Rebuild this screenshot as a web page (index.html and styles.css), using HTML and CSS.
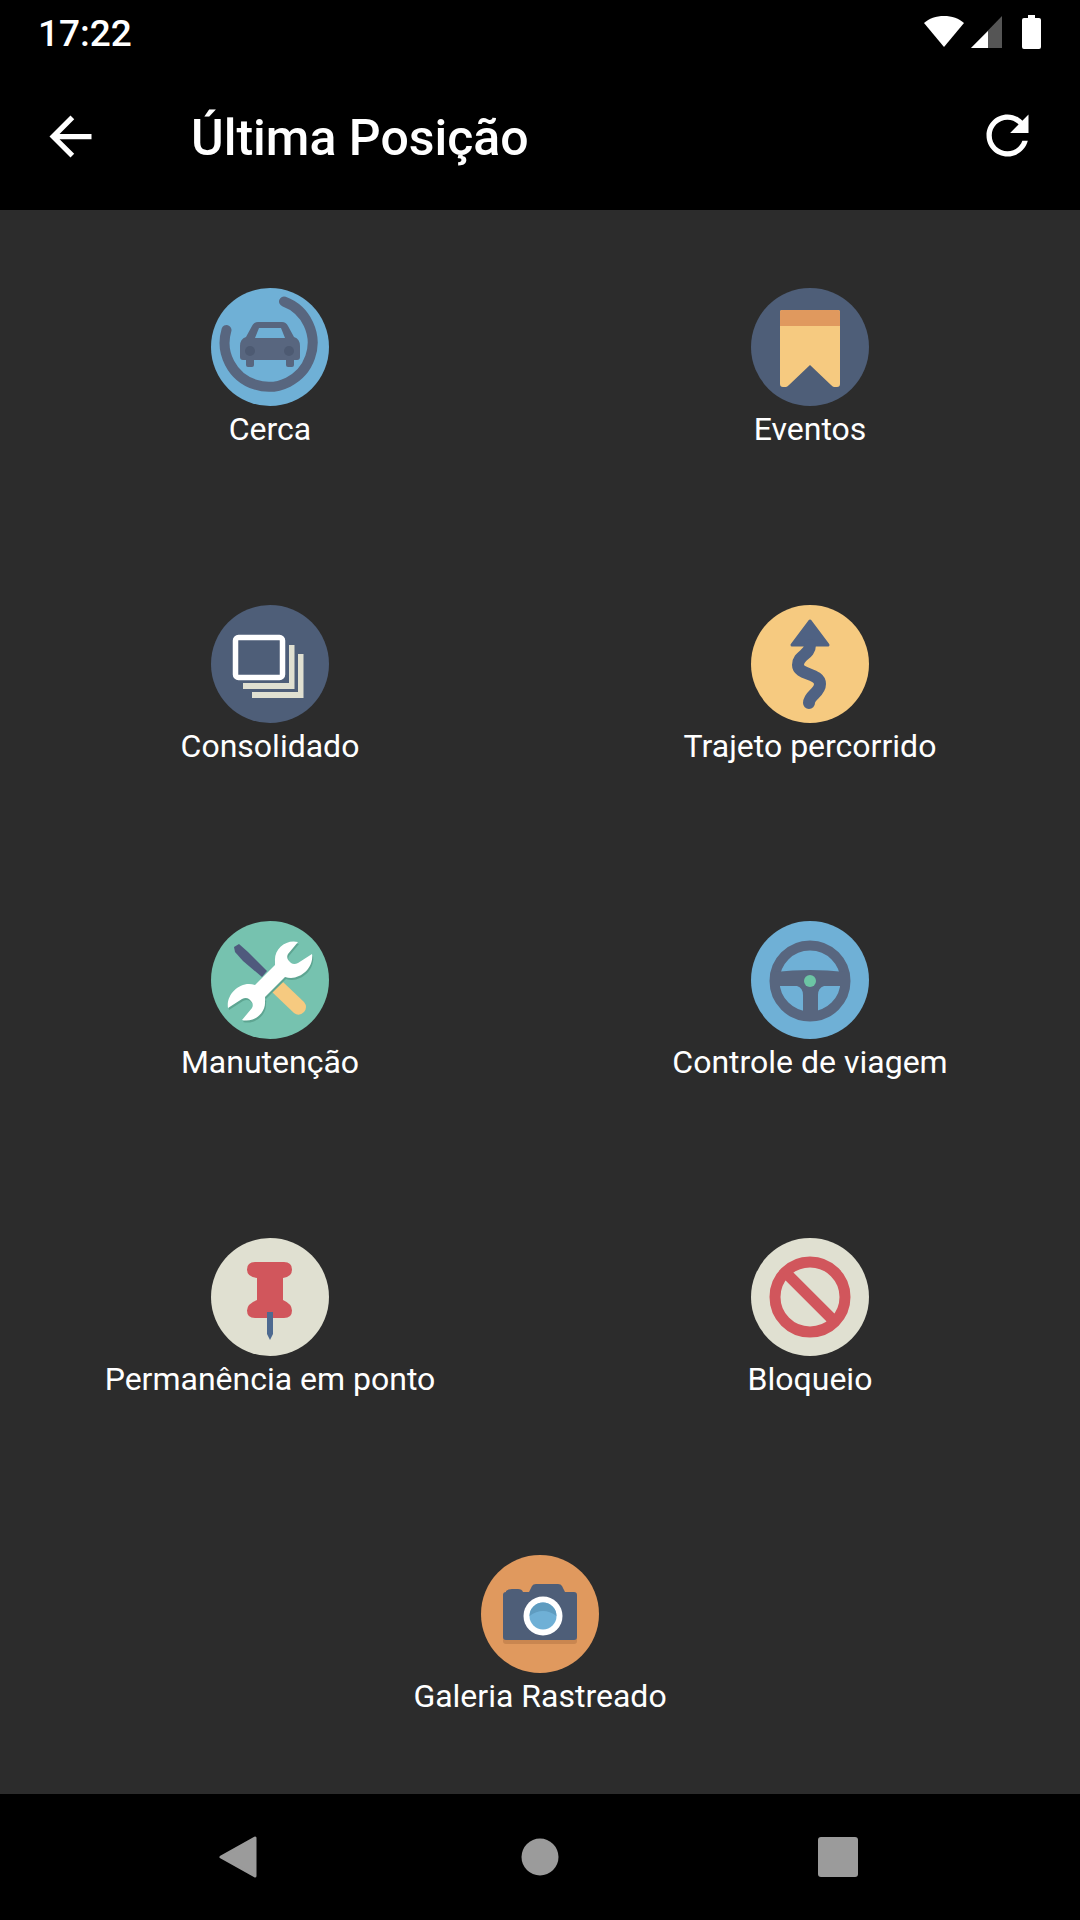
FILE: index.html
```html
<!DOCTYPE html>
<html lang="pt-BR">
<head>
  <meta charset="UTF-8">
  <meta name="viewport" content="width=device-width, initial-scale=1">
  <title>Última Posição</title>
  <link rel="stylesheet" href="styles.css">
</head>
<body>
  <div class="status-bar">
    <span class="time">17:22</span>
    <div class="status-icons">
      <svg class="wifi" width="40" height="31" viewBox="0 0 40 31"><path d="M20 31 0 7C5 2.500 12 0 20 0s15 2.500 20 7z" fill="#fff"/></svg>
      <svg class="signal" width="31" height="32" viewBox="0 0 31 32"><path d="M31 0v32H0z" fill="#555"/><path d="M17 15v17H0z" fill="#fff"/></svg>
      <svg class="battery" width="19" height="34" viewBox="0 0 19 34"><path d="M6 0h7v3h4q2 0 2 2v27q0 2-2 2H2q-2 0-2-2V5q0-2 2-2h4z" fill="#fff"/></svg>
    </div>
  </div>

  <header class="toolbar">
    <svg class="back" width="63" height="63" viewBox="0 0 24 24"><path d="M20 11H7.830l5.590-5.590L12 4l-8 8 8 8 1.410-1.410L7.830 13H20v-2z" fill="#fff"/></svg>
    <h1 class="title">Última Posição</h1>
    <svg class="refresh" width="63" height="63" viewBox="0 0 24 24"><path d="M17.650 6.350C16.200 4.900 14.210 4 12 4c-4.420 0-7.990 3.580-7.990 8s3.570 8 7.990 8c3.730 0 6.840-2.550 7.730-6h-2.080c-.82 2.330-3.040 4-5.650 4-3.310 0-6-2.690-6-6s2.690-6 6-6c1.660 0 3.140.69 4.220 1.780L13 11h7V4l-2.350 2.350z" fill="#fff"/></svg>
  </header>

  <main class="menu">
    <div class="item">
      <svg class="icon" viewBox="0 0 118 118">
        <circle cx="59" cy="59" r="59" fill="#6fb0d6"/>
        <path d="M73 13.500A44 44 0 1 1 15.500 42" fill="none" stroke="#58667f" stroke-width="10" stroke-linecap="round"/>
        <path d="M29 58q0-7 6-9l6-11q2-4 6-4h24q4 0 6 4l6 11q6 2 6 9v11q0 3-3 3h-3v5q0 2-2 2h-4q-2 0-2-2v-5H43v5q0 2-2 2h-4q-2 0-2-2v-5h-3q-3 0-3-3z" fill="#58667f"/>
        <path d="M48 40h22l4 10H44z" fill="#6fb0d6"/>
        <circle cx="39" cy="63" r="5" fill="#4d5a72"/>
        <circle cx="78" cy="63" r="5" fill="#4d5a72"/>
      </svg>
      <span class="label">Cerca</span>
    </div>

    <div class="item">
      <svg class="icon" viewBox="0 0 118 118">
        <circle cx="59" cy="59" r="59" fill="#4e5e78"/>
        <path d="M31 22h56q2 0 2 2v72q0 3-3 3h-3q-1 0-3-2L59 77 38 97q-2 2-3 2h-3q-3 0-3-3V24q0-2 2-2z" fill="#f6ca80"/>
        <path d="M31 22h56q2 0 2 2v14H29V24q0-2 2-2z" fill="#e0995e"/>
      </svg>
      <span class="label">Eventos</span>
    </div>

    <div class="item">
      <svg class="icon" viewBox="0 0 118 118">
        <circle cx="59" cy="59" r="59" fill="#4e5e78"/>
        <path d="M78 40h5.500v44H32v-6h46z" fill="#e0e0d1"/>
        <path d="M87 49h5.500v44H41v-6h46z" fill="#e0e0d1"/>
        <rect x="24.500" y="32.500" width="47" height="40" rx="3" fill="none" stroke="#fff" stroke-width="5.500"/>
      </svg>
      <span class="label">Consolidado</span>
    </div>

    <div class="item">
      <svg class="icon" viewBox="0 0 118 118">
        <circle cx="59" cy="59" r="59" fill="#f6ca80"/>
        <path d="M59 16 77 40H41z" fill="#4f6283" stroke="#4f6283" stroke-width="3" stroke-linejoin="round"/>
        <path d="M59 40C59 50 47 50 47 60 47 70 69 68 69 79 69 88 58 90 58 98" fill="none" stroke="#4f6283" stroke-width="12" stroke-linecap="round"/>
      </svg>
      <span class="label">Trajeto percorrido</span>
    </div>

    <div class="item">
      <svg class="icon" viewBox="0 0 118 118">
        <circle cx="59" cy="59" r="59" fill="#76c2af"/>
        <path d="M23 26 28 23 37 31 56 50 51 56 32 40 24 31z" fill="#4f5a7d"/>
        <path d="M72 61 93 81Q97 86 93 91 88 96 83 92L61 71z" fill="#f6ca80"/>
        <path class="wrench-shadow" d="M87 21 77 33Q75 37 78 40L80 42Q83 44 87 42L101 33C103 45 92 57 80 57Q77 57 74 56L54 76C54 77 54.500 79 54 80 55 92 43 102 31 99L41 87Q43 83 40 80L38 78Q35 76 31 78L17 87C15 75 26 63 38 63Q41 63 44 64L64 44C64 43 64 42 64 40 63 28 75 18 87 21Z"/>
        <path d="M87 21 77 33Q75 37 78 40L80 42Q83 44 87 42L101 33C103 45 92 57 80 57Q77 57 74 56L54 76C54 77 54.500 79 54 80 55 92 43 102 31 99L41 87Q43 83 40 80L38 78Q35 76 31 78L17 87C15 75 26 63 38 63Q41 63 44 64L64 44C64 43 64 42 64 40 63 28 75 18 87 21Z" fill="#fff"/>
      </svg>
      <span class="label">Manutenção</span>
    </div>

    <div class="item">
      <svg class="icon" viewBox="0 0 118 118">
        <circle cx="59" cy="59" r="59" fill="#6fb0d6"/>
        <circle cx="59" cy="60" r="35.500" fill="none" stroke="#58667f" stroke-width="10"/>
        <path d="M24 51Q59 47 94 51V65H73Q67 67 67 74V95H52V74Q52 67 46 65H24z" fill="#58667f"/>
        <circle cx="59" cy="60" r="6" fill="#6cc5a4"/>
      </svg>
      <span class="label">Controle de viagem</span>
    </div>

    <div class="item">
      <svg class="icon" viewBox="0 0 118 118">
        <circle cx="59" cy="59" r="59" fill="#e0e0d1"/>
        <path d="M44 24H73Q81 24 81 31.500 81 39 72 40V62Q81 66 81 72.500 81 80 73 80H44Q36 80 36 72.500 36 66 46 62V40Q36 39 36 31.500 36 24 44 24z" fill="#d1565c"/>
        <path d="M56 74h6v22l-3 6-3-6z" fill="#4e6a90"/>
      </svg>
      <span class="label">Permanência em ponto</span>
    </div>

    <div class="item">
      <svg class="icon" viewBox="0 0 118 118">
        <circle cx="59" cy="59" r="59" fill="#e0e0d1"/>
        <circle cx="59" cy="59" r="35" fill="none" stroke="#d1565c" stroke-width="11"/>
        <path d="M34 34 84 84" stroke="#d1565c" stroke-width="11"/>
      </svg>
      <span class="label">Bloqueio</span>
    </div>

    <div class="item item-wide">
      <svg class="icon" viewBox="0 0 118 118">
        <circle cx="59" cy="59" r="59" fill="#e0995e"/>
        <rect x="22" y="41" width="74" height="48" rx="3" fill="#c98650"/>
        <path d="M25 37V36q2-2 6-2h6q4 0 5 3h6l3-6q1-2 4-2h22q3 0 4 2l3 6h9q3 0 3 3v42q0 3-3 3H25q-3 0-3-3V40q0-3 3-3z" fill="#4e5e78"/>
        <circle cx="62" cy="61" r="19.500" fill="#fff"/>
        <circle cx="62" cy="61" r="13.500" fill="#6fb0d6"/>
        <path d="M48.500 61a13.500 13.500 0 0 1 27 0q-13.500-10-27 0z" fill="#5f9cc0"/>
      </svg>
      <span class="label">Galeria Rastreado</span>
    </div>
  </main>

  <nav class="nav-bar">
    <svg width="60" height="60" viewBox="0 0 60 60"><path d="M11 30 45 11V49z" fill="#9b9b9b" stroke="#9b9b9b" stroke-width="3" stroke-linejoin="round"/></svg>
    <svg width="60" height="60" viewBox="0 0 60 60"><circle cx="30" cy="30" r="18.500" fill="#9b9b9b"/></svg>
    <svg width="60" height="60" viewBox="0 0 60 60"><rect x="8" y="10" width="40" height="40" rx="3" fill="#9b9b9b"/></svg>
  </nav>
</body>
</html>
```

FILE: styles.css
```css
* { box-sizing: border-box; }
body {
  font-family: Roboto, sans-serif;
  display: flex;
  flex-direction: column;
  width: 1080px;
  height: 1920px;
  margin: 0;
  background: #2c2c2c;
  color: #fff;
  overflow: hidden;
}
.status-bar {
  display: flex;
  justify-content: space-between;
  align-items: center;
  height: 63px;
  padding: 0 39px 0 38px;
  background: #000;
}
.time {
  font-size: 37px;
  font-weight: 500;
  line-height: 63px;
  padding-top: 3px;
}
.status-icons {
  display: flex;
  align-items: center;
  gap: 7px;
}
.battery {
  margin-left: 13px;
}
.toolbar {
  display: flex;
  align-items: center;
  height: 147px;
  padding: 0 41px 0 39px;
  background: #000;
}
.title {
  flex: 1;
  margin: 0 0 0 89px;
  padding-top: 2px;
  font-size: 50px;
  font-weight: 500;
}
.refresh {
  margin-top: -2px;
}
.menu {
  flex: 1;
  display: grid;
  grid-template-columns: 1fr 1fr;
  grid-auto-rows: 1fr;
  align-items: center;
}
.item {
  display: flex;
  flex-direction: column;
  align-items: center;
}
.item-wide {
  grid-column: span 2;
}
.icon {
  display: block;
  width: 118px;
  height: 118px;
  filter: blur(0.5px);
}
.wrench-shadow {
  fill: #5ea592;
  transform: translate(1px, 2px);
}
.label {
  padding-top: 3px;
  font-size: 32px;
  line-height: 40px;
}
.nav-bar {
  display: flex;
  justify-content: center;
  align-items: center;
  gap: 240px;
  height: 126px;
  background: #000;
}
```
